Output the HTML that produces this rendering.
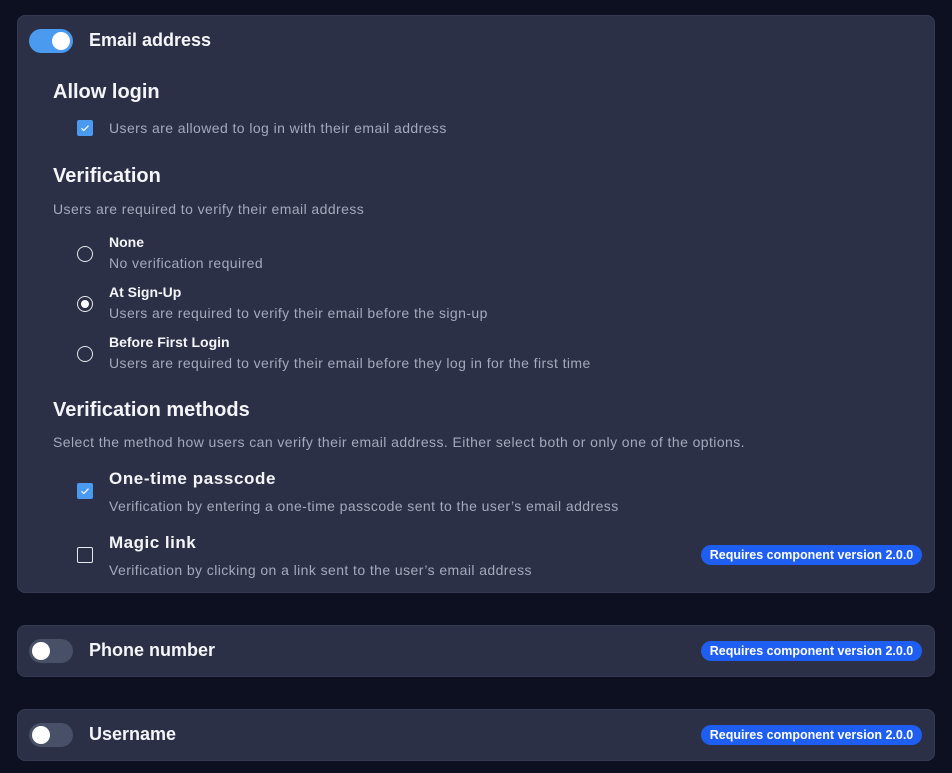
<!DOCTYPE html>
<html><head><style>
*{margin:0;padding:0;box-sizing:border-box}
body{width:952px;height:773px;background:#0d1020;font-family:"Liberation Sans",sans-serif;position:relative;overflow:hidden;color:#fff}
.card{position:absolute;left:17px;width:918px;background:#2b3046;border-radius:8px;border:1px solid #343a52}
.a{position:absolute;white-space:nowrap}
.tog{position:absolute;width:44px;height:24px;border-radius:12px}
.tog i{position:absolute;top:3px;width:18px;height:18px;border-radius:50%;background:#fff}
.h1{font-size:18px;font-weight:bold;color:#f4f5f8}
.h2{font-size:20px;font-weight:bold;color:#f4f5f8}
.s{font-size:14px;color:#a4a9bd;letter-spacing:0.42px}
.b{font-size:14px;font-weight:bold;color:#f4f5f8}
.cb{position:absolute;width:16px;height:16px;border-radius:2px}
.cb.on{background:#4a9af0}
.cb.off{border:1.5px solid #e8e9ee}
.rd{position:absolute;width:16px;height:16px;border-radius:50%;border:1.5px solid #e8e9ee}
.badge{position:absolute;left:701px;height:20px;width:221px;background:#1e5ef0;border-radius:10px;font-size:12.5px;font-weight:bold;text-align:center;line-height:20px;color:#fff}
</style></head><body>
<div class="card" style="top:15px;height:578px"></div>
<div class="tog" style="left:29px;top:29px;background:#4a9af0"><i style="left:23px"></i></div>
<div class="a h1" style="left:89px;top:30px">Email address</div>
<div class="a h2" style="left:53px;top:81px">Allow login</div>
<div class="cb on" style="left:77px;top:120px"><svg width="16" height="16"><path d="M4.5 8.3l2.3 2.2 4.7-4.8" stroke="#fff" stroke-width="1.2" fill="none"/></svg></div>
<div class="a s" style="left:109px;top:120px">Users are allowed to log in with their email address</div>
<div class="a h2" style="left:53px;top:165px">Verification</div>
<div class="a s" style="left:53px;top:201px">Users are required to verify their email address</div>
<div class="rd" style="left:77px;top:246px"></div>
<div class="a b" style="left:109px;top:234px">None</div>
<div class="a s" style="left:109px;top:255px">No verification required</div>
<div class="rd" style="left:77px;top:296px"><i style="position:absolute;left:2.5px;top:2.5px;width:8px;height:8px;border-radius:50%;background:#fff"></i></div>
<div class="a b" style="left:109px;top:284px">At Sign-Up</div>
<div class="a s" style="left:109px;top:305px">Users are required to verify their email before the sign-up</div>
<div class="rd" style="left:77px;top:346px"></div>
<div class="a b" style="left:109px;top:334px">Before First Login</div>
<div class="a s" style="left:109px;top:355px">Users are required to verify their email before they log in for the first time</div>
<div class="a h2" style="left:53px;top:399px">Verification methods</div>
<div class="a s" style="left:53px;top:434px">Select the method how users can verify their email address. Either select both or only one of the options.</div>
<div class="cb on" style="left:77px;top:483px"><svg width="16" height="16"><path d="M4.5 8.3l2.3 2.2 4.7-4.8" stroke="#fff" stroke-width="1.2" fill="none"/></svg></div>
<div class="a h1" style="left:109px;top:469px;font-size:17px;letter-spacing:0.6px">One-time passcode</div>
<div class="a s" style="left:109px;top:498px">Verification by entering a one-time passcode sent to the user’s email address</div>
<div class="cb off" style="left:77px;top:547px"></div>
<div class="a h1" style="left:109px;top:533px;font-size:17px;letter-spacing:0.5px">Magic link</div>
<div class="a s" style="left:109px;top:562px">Verification by clicking on a link sent to the user’s email address</div>
<div class="badge" style="top:545px">Requires component version 2.0.0</div>

<div class="card" style="top:625px;height:52px"></div>
<div class="tog" style="left:29px;top:639px;background:#475066"><i style="left:3px"></i></div>
<div class="a h1" style="left:89px;top:640px">Phone number</div>
<div class="badge" style="top:641px">Requires component version 2.0.0</div>

<div class="card" style="top:709px;height:52px"></div>
<div class="tog" style="left:29px;top:723px;background:#475066"><i style="left:3px"></i></div>
<div class="a h1" style="left:89px;top:724px">Username</div>
<div class="badge" style="top:725px">Requires component version 2.0.0</div>
</body></html>
